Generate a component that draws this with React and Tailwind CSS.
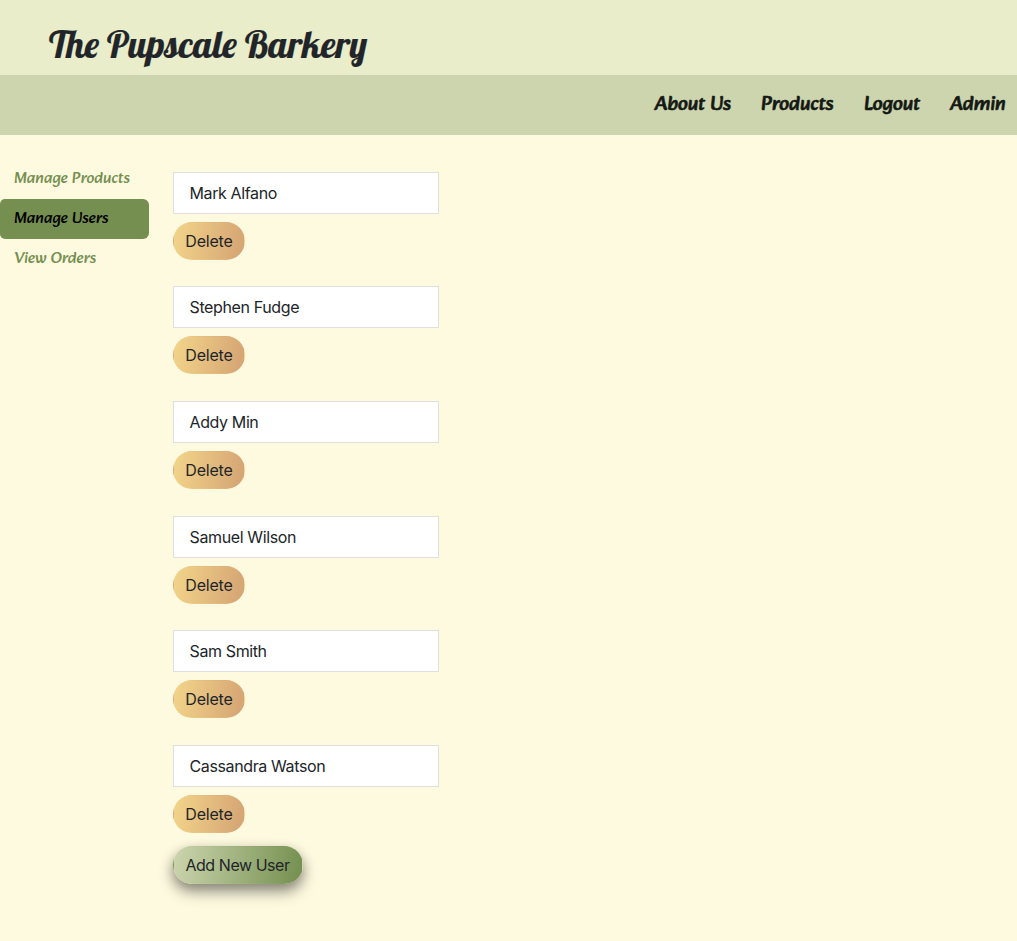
const users = ['Mark Alfano', 'Stephen Fudge', 'Addy Min', 'Samuel Wilson', 'Sam Smith', 'Cassandra Watson'];

const navLinks = [
  { label: 'About Us', width: 'w-[76.5px]' },
  { label: 'Products', width: 'w-[73px]' },
  { label: 'Logout', width: 'w-[56px]' },
  { label: 'Admin', width: 'w-[56px]' },
];

function Header() {
  return (
    <header>
      <div className="flex h-[75px] items-center bg-[#e9edc9] pl-[49px] pt-[13px]">
        <h1 className="whitespace-nowrap font-['Lobster','Liberation_Serif',serif] text-[37.35px] font-medium leading-[48px] tracking-normal text-[#212529] [-webkit-text-stroke:0.2px_#212529]">
          The Pupscale Barkery
        </h1>
      </div>
      <nav className="flex h-[60px] items-center justify-end gap-[30px] bg-[#ccd5ae] pr-[11px]">
        {navLinks.map((link) => (
          <a
            key={link.label}
            href="#"
            className={`${link.width} whitespace-nowrap font-['Alkatra','Lato',sans-serif] text-[20px] font-normal tracking-normal text-[#141814] [-webkit-text-stroke:0.6px_#141814]`}
          >
            {link.label}
          </a>
        ))}
      </nav>
    </header>
  );
}

function Sidebar() {
  const base = "flex h-10 items-center pl-[14px] font-['Alkatra','Lato',sans-serif] text-[16px] font-normal tracking-normal whitespace-nowrap";
  return (
    <aside className="w-[149px] pt-6">
      <a href="#" className={`${base} text-[#758f50]`}>Manage Products</a>
      <a href="#" className={`${base} rounded-r-md rounded-l-[5px] bg-[#758f50] text-black`}>Manage Users</a>
      <a href="#" className={`${base} text-[#758f50]`}>View Orders</a>
    </aside>
  );
}

function UserRow({ name }) {
  return (
    <li className="h-[114.6px]">
      <div className="flex h-[42px] w-[266px] items-center border border-[#dfdfdf] bg-white pl-[15.5px] text-[#212529]">
        {name}
      </div>
      <button className="mt-2 block h-[38px] w-[72px] rounded-[20px] border border-transparent bg-linear-[100deg,#f3d58a,#d4a373] tracking-[-0.2px] text-[#212529]">
        Delete
      </button>
    </li>
  );
}

export default function App() {
  return (
    <div className="min-h-[941px] bg-[#fefae0] font-['Inter',sans-serif] text-[16px] tracking-[-0.38px]">
      <Header />
      <main className="flex gap-6">
        <Sidebar />
        <section className="pt-[36.8px]">
          <ul>
            {users.map((name) => (
              <UserRow key={name} name={name} />
            ))}
          </ul>
          <button className="-mt-[13.4px] block h-[38px] w-[130px] rounded-[20px] border border-transparent bg-linear-[100deg,#ccd5ae,#738f4e] pr-px tracking-[-0.45px] text-[#212529] shadow-[0_8px_16px_0_rgba(0,0,0,0.3),0_5px_12px_0_rgba(0,0,0,0.25)]">
            Add New User
          </button>
        </section>
      </main>
    </div>
  );
}
